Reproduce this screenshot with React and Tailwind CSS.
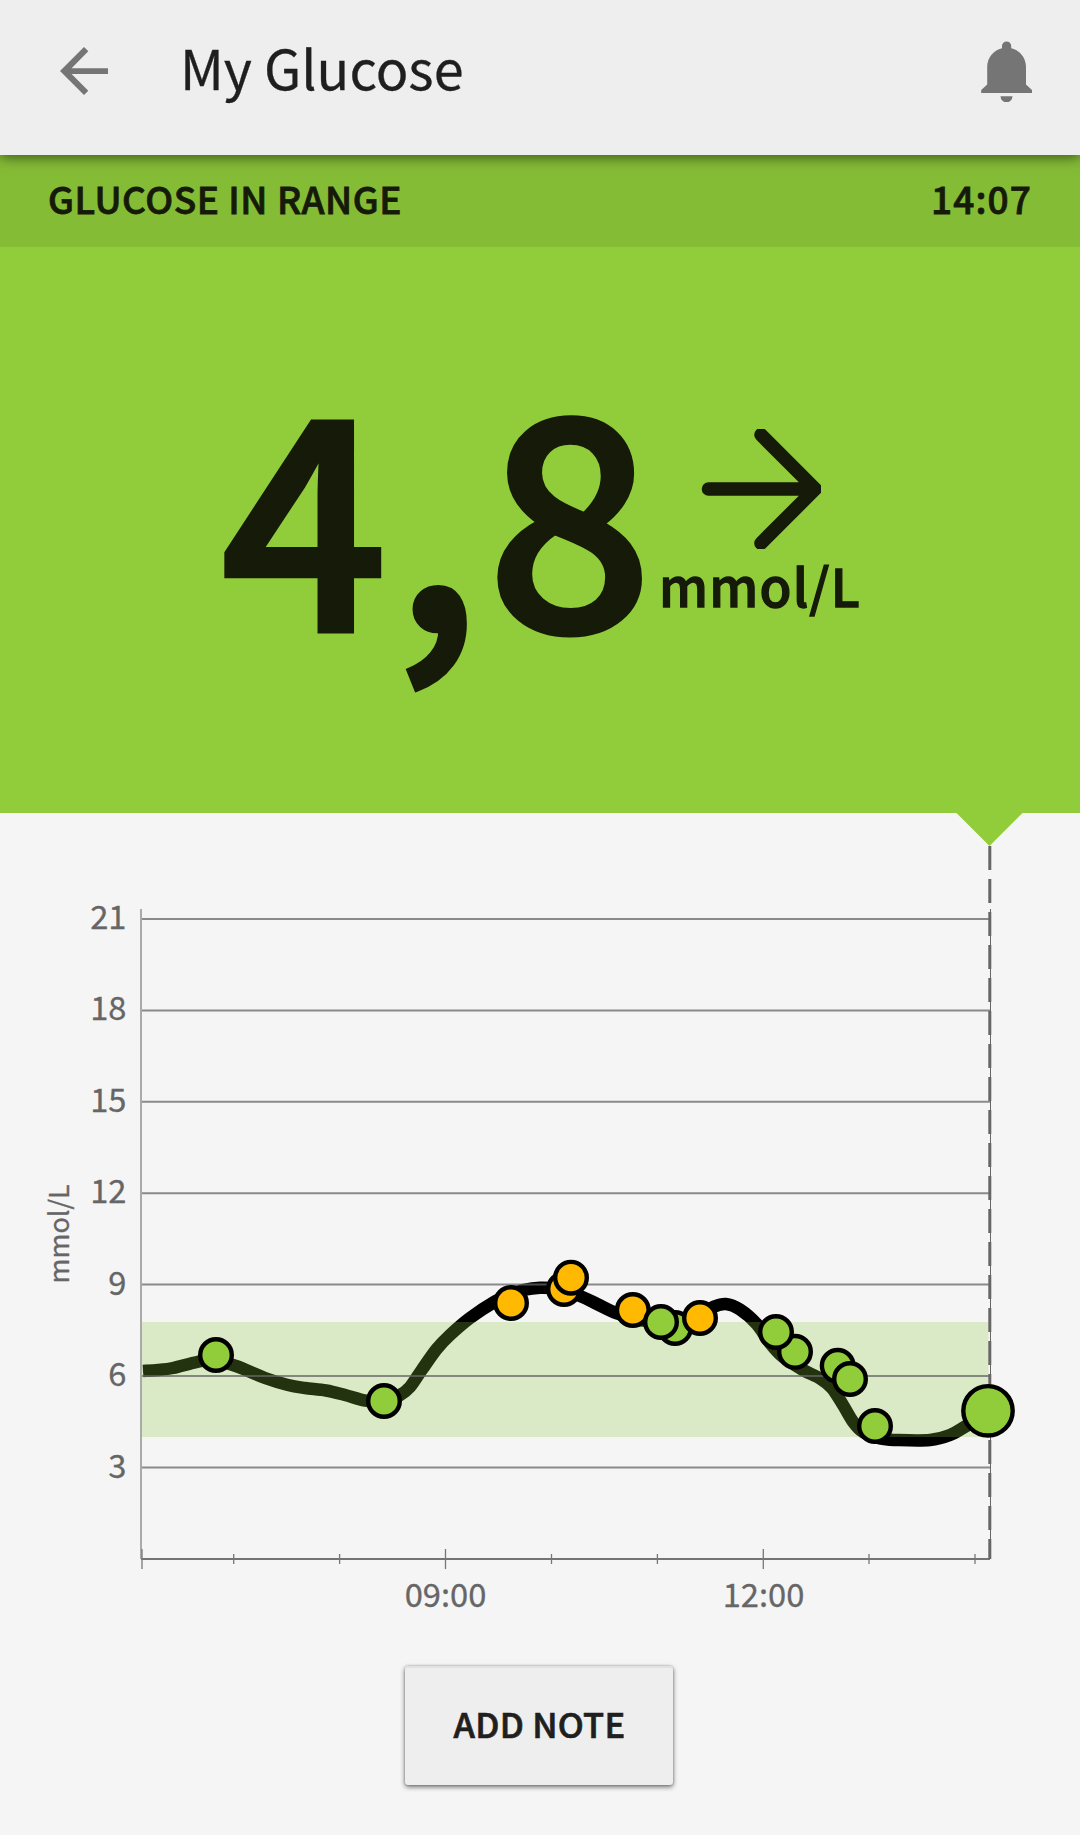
const gridLabels = [
  { v: "21", y: 919 },
  { v: "18", y: 1010.4 },
  { v: "15", y: 1101.8 },
  { v: "12", y: 1193.2 },
  { v: "9", y: 1284.6 },
  { v: "6", y: 1376 },
  { v: "3", y: 1467.6 },
];

const ticks = [
  { x: 142, big: true },
  { x: 233.7 },
  { x: 339.6 },
  { x: 445.5, big: true },
  { x: 551.5 },
  { x: 657.4 },
  { x: 763.3, big: true },
  { x: 869 },
  { x: 975 },
];

const points = [
  [216, 1355, "g"],
  [384, 1401, "g"],
  [511, 1303, "o"],
  [564, 1289, "o"],
  [571, 1277.7, "o"],
  [632.8, 1310, "o"],
  [675, 1328, "g"],
  [661, 1322, "g"],
  [700, 1318, "o"],
  [795, 1351.8, "g"],
  [776, 1332, "g"],
  [837.7, 1365.8, "g"],
  [850, 1379, "g"],
  [875, 1426, "g"],
];

const curve = [
  [143, 1371], [158, 1370], [173, 1368], [197, 1362], [212, 1360], [236, 1366], [265, 1378],
  [288, 1385], [305, 1388], [326, 1390.5], [345, 1395], [365, 1400.5], [384, 1402], [400, 1395], [410, 1387],
  [421.7, 1370], [436.7, 1349], [450, 1335], [470, 1318], [495, 1301.5], [511, 1294], [523, 1290],
  [540, 1287.7], [558, 1289], [580, 1296], [597, 1304], [617, 1313.5], [640, 1320], [675, 1324],
  [700, 1314], [713, 1307], [725.7, 1304], [740, 1309.5], [756.7, 1324], [770, 1343], [783, 1357],
  [803, 1370], [820, 1378.5], [831.7, 1388], [843, 1405], [853, 1421.7], [863, 1432], [880, 1438.5],
  [896.7, 1440], [930, 1440], [950, 1435], [966.7, 1425.7], [988, 1414],
];

function smooth(p) {
  let d = `M${p[0][0]} ${p[0][1]}`;
  for (let i = 0; i < p.length - 1; i++) {
    const a = p[i - 1] || p[i];
    const b = p[i];
    const c = p[i + 1];
    const e = p[i + 2] || c;
    d += ` C${b[0] + (c[0] - a[0]) / 6} ${b[1] + (c[1] - a[1]) / 6} ${c[0] - (e[0] - b[0]) / 6} ${c[1] - (e[1] - b[1]) / 6} ${c[0]} ${c[1]}`;
  }
  return d;
}

function Header() {
  return (
    <header className="relative z-10 flex h-[155px] items-center bg-[#eeeeee] pb-[13px] shadow-[0_3px_12px_rgba(0,0,0,0.5)]">
      <svg className="ml-[60px] h-[50px] w-[49px] shrink-0" viewBox="0 0 49 50" fill="#757575">
        <path d="M48 22.2H11.6L28.3 5.2 24 1 0 25l24 24 4.3-4.2L11.6 28H48z" />
      </svg>
      <h1 className="ml-[71px] pb-[8px] text-[54px] leading-none whitespace-nowrap text-[#1f1f1f] [-webkit-text-stroke:0.3px]">
        My Glucose
      </h1>
      <svg className="mr-[47px] ml-auto h-[61px] w-[53px] shrink-0" viewBox="0 0 53 61" fill="#757575">
        <path d="M22 7.2V5a4.6 4.6 0 0 1 9.2 0v2.2C40 9.3 46 17 46 26v17.5L52 49v3H1.2v-3l6-5.5V26C7.2 17 13.2 9.3 22 7.2zM20.5 55.3h12a6 6 0 0 1-12 0z" />
      </svg>
    </header>
  );
}

function Reading() {
  return (
    <section className="h-[658px] bg-[#91cc3b] text-[#151a09]">
      <div className="flex h-[92px] items-center justify-between bg-[#85bc36] px-12 pb-[6px] text-[37px] leading-none font-medium [-webkit-text-stroke:0.8px]">
        <span className="tracking-[0.55px]">GLUCOSE IN RANGE</span>
        <span className="tracking-[1.1px]">14:07</span>
      </div>
      <div className="flex h-[566px] pt-[97px] pl-[221px]">
        <span className="w-[439px] text-[292px] leading-[320px] font-medium tracking-[6px] whitespace-nowrap [-webkit-text-stroke:5px]">
          4,8
        </span>
        <div className="pt-[85px]">
          <svg className="ml-[41px] block h-[120px] w-[120px]" viewBox="0 0 120 120" fill="none" stroke="#151a09" strokeWidth="13.6" strokeLinecap="round">
            <path d="M7.5 60H112M60 5.8L114.2 60L60 114.2" />
          </svg>
          <p className="mt-[6px] ml-[-1px] text-[52px] leading-[60px] font-medium tracking-[1.2px] whitespace-nowrap [-webkit-text-stroke:1.3px]">
            mmol/L
          </p>
        </div>
      </div>
    </section>
  );
}

function Chart() {
  return (
    <svg className="block h-[827px] w-[1080px]" viewBox="0 813 1080 827">
      <path d="M956.5 813H1022.5L989.5 846z" fill="#91cc3b" />
      <path d={smooth(curve)} fill="none" stroke="#000" strokeWidth="12.5" />
      <rect x="142" y="1322" width="846.5" height="115" fill="#91cc3b" fillOpacity="0.25" />
      <g stroke="#666" strokeWidth="2" strokeOpacity="0.75">
        {gridLabels.map((g) => (
          <path key={g.v} d={`M141 ${g.y}H990`} />
        ))}
        <path d="M141 1559H990" strokeOpacity="0.9" />
      </g>
      <path d="M141 909V1559" stroke="#aaa" strokeWidth="2" />
      {ticks.map((t) => (
        <path key={t.x} d={t.big ? `M${t.x} 1549V1569` : `M${t.x} 1554V1564`} stroke="#777" strokeWidth="1.3" />
      ))}
      <path d="M990.5 909V1559" stroke="#666" strokeWidth="1" />
      <path d="M989.8 846V1559" stroke="#666" strokeWidth="3" strokeDasharray="24 9" />
      <g stroke="#000" strokeWidth="4.4">
        {points.map(([x, y, c]) => (
          <circle key={x} cx={x} cy={y} r="15.8" fill={c === "g" ? "#91cc3b" : "#ffb900"} />
        ))}
        <circle cx="988" cy="1410.8" r="24.7" fill="#91cc3b" />
      </g>
      <g fill="#666" stroke="#666" strokeWidth="0.3" fontSize="32.7">
        {gridLabels.map((g) => (
          <text key={g.v} x="126.5" y={g.y + 10} textAnchor="end">{g.v}</text>
        ))}
        <text x="445.5" y="1607" textAnchor="middle">09:00</text>
        <text x="763.5" y="1607" textAnchor="middle">12:00</text>
        <text transform="translate(69 1283.5) rotate(-90)" fontSize="27">mmol/L</text>
      </g>
    </svg>
  );
}

export default function App() {
  return (
    <main className="h-[1835px] w-[1080px] overflow-hidden bg-[#f5f5f5] font-['Noto_Sans_CJK_SC',sans-serif]">
      <Header />
      <Reading />
      <Chart />
      <div className="flex justify-center pt-[26px] pr-[2px]">
        <button className="h-[119px] w-[268px] rounded-[3px] bg-[#eeeeee] pb-[4px] pl-[1px] text-[34.5px] leading-none font-medium tracking-[0.3px] text-[#1f1f1f] shadow-[0_2px_5px_rgba(0,0,0,0.55),0_0_2px_rgba(0,0,0,0.3),inset_0_2px_0_#e2e2e2] [-webkit-text-stroke:0.7px]">
          ADD NOTE
        </button>
      </div>
    </main>
  );
}
